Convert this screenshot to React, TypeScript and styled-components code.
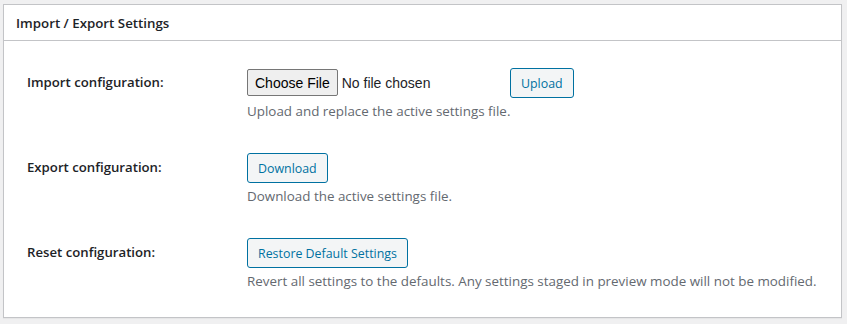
import React from "react";
import styled, { createGlobalStyle } from "styled-components";

const Global = createGlobalStyle`
  html, body { margin: 0; padding: 0; background: #f0f0f1; }
  body { font-family: "Open Sans", "Noto Sans", sans-serif; color: #1d2327; font-size: 13.3px; }
`;

const Page = styled.div`
  padding: 4px 5px 5px 3px;
`;

const Panel = styled.section`
  background: #fff;
  border: 1px solid #c3c4c7;
  box-shadow: 0 1px 1px rgba(0,0,0,0.04);
`;

const PanelHeader = styled.h2`
  margin: 0;
  padding: 10px 12px 8px 12px;
  font-size: 13.3px;
  font-weight: 600;
  line-height: 17px;
  border-bottom: 1px solid #c3c4c7;
  color: #1d2327;
`;

const Inside = styled.div`
  padding: 11px 12px 10px 12px;
`;

const Row = styled.div`
  display: grid;
  grid-template-columns: 231px 1fr;
  padding: 15px 0;
`;

const Label = styled.div`
  padding: 6px 0 0 11px;
  font-size: 13.2px;
  font-weight: 600;
  line-height: 18px;
`;

const Field = styled.div`
  display: flex;
  flex-direction: column;
  align-items: flex-start;
`;

const Controls = styled.div`
  display: flex;
  align-items: center;
  min-height: 31px;
`;

const FileInput = styled.input`
  width: 263px;
  font-family: "Liberation Sans", Arial, sans-serif;
  font-size: 14px;
  color: #1d2327;
  &::file-selector-button {
    font-family: "Liberation Sans", Arial, sans-serif;
    font-size: 14px;
    height: 27px;
    padding: 0 7px;
    margin-right: 4px;
    background: #efefef;
    border: 1px solid #767676;
    border-radius: 2px;
    color: #000;
  }
`;

const Button = styled.button`
  font-family: "Open Sans", "Noto Sans", sans-serif;
  font-size: 12.4px;
  line-height: 27px;
  height: 30px;
  padding: 1px 10px 0;
  color: #0071a1;
  border: 1px solid #0071a1;
  border-radius: 3px;
  background: #f3f5f6;
  cursor: pointer;
`;

const Description = styled.p`
  margin: 3px 0 0;
  color: #646970;
  font-size: 13.4px;
  line-height: 21px;
`;

export default function App() {
  return (
    <>
      <Global />
      <Page>
        <Panel>
          <PanelHeader>Import / Export Settings</PanelHeader>
          <Inside>
            <Row>
              <Label>Import configuration:</Label>
              <Field>
                <Controls>
                  <FileInput type="file" />
                  <Button>Upload</Button>
                </Controls>
                <Description>Upload and replace the active settings file.</Description>
              </Field>
            </Row>
            <Row>
              <Label>Export configuration:</Label>
              <Field>
                <Controls>
                  <Button>Download</Button>
                </Controls>
                <Description>Download the active settings file.</Description>
              </Field>
            </Row>
            <Row>
              <Label>Reset configuration:</Label>
              <Field>
                <Controls>
                  <Button>Restore Default Settings</Button>
                </Controls>
                <Description>
                  Revert all settings to the defaults. Any settings staged in preview mode will not be modified.
                </Description>
              </Field>
            </Row>
          </Inside>
        </Panel>
      </Page>
    </>
  );
}
